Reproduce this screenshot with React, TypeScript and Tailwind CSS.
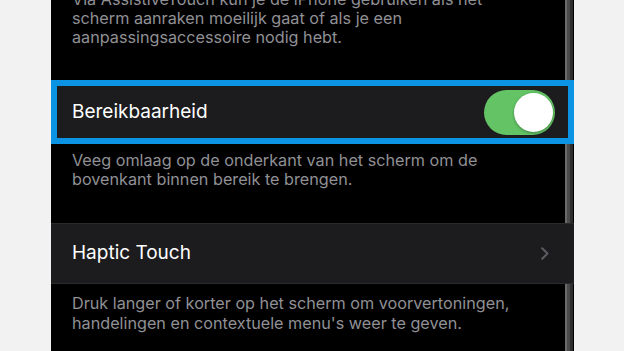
import React from "react";

const font = { fontFamily: "Inter, 'Noto Sans', 'Liberation Sans', sans-serif" };

export default function App() {
  return (
    <div className="w-[624px] h-[351px] overflow-hidden bg-[#f2f2f2] flex" style={font}>
      <div className="ml-[51px] w-[523px] h-full bg-black relative flex flex-col">
        {/* right bezel edge */}
        <div className="absolute top-0 bottom-0 right-0 w-[9px] flex">
          <div className="w-[2px] bg-[#6a6a6a]" />
          <div className="w-[3px] bg-[#4a4a4a]" />
          <div className="w-[3px] bg-[#2e2e2e]" />
          <div className="w-[1px] bg-black" />
        </div>

        <div className="relative z-10 flex flex-col">
          <p className="mt-[-10px] pl-[21px] pr-[30px] text-[16.2px] leading-[19px] text-[#909095]">
            Via AssistiveTouch kun je de iPhone gebruiken als het
            <br />
            scherm aanraken moeilijk gaat of als je een
            <br />
            aanpassingsaccessoire nodig hebt.
          </p>

          <div className="mt-[33px] h-[64px] border-[6px] border-[#0b93e4] bg-[#1c1c1e] flex items-center justify-between pl-[15px] pr-[13px]">
            <span className="text-[19px] text-white">Bereikbaarheid</span>
            <div className="w-[71px] h-[45px] rounded-full bg-[#64c465] flex items-center justify-end pr-[2px]">
              <div className="w-[39px] h-[39px] rounded-full bg-white shadow-[0_1px_3px_rgba(0,0,0,0.35)]" />
            </div>
          </div>

          <p className="mt-[7px] pl-[21px] pr-[30px] text-[16.2px] leading-[19px] text-[#909095]">
            Veeg omlaag op de onderkant van het scherm om de
            <br />
            bovenkant binnen bereik te brengen.
          </p>

          <div className="mt-[34px] h-[61px] bg-[#1c1c1e] border-t border-[#2a2a2c] border-b flex items-center justify-between pl-[21px] pr-[25px]">
            <span className="text-[19px] text-white">Haptic Touch</span>
            <svg width="8" height="13" viewBox="0 0 8 13" fill="none">
              <path d="M1.2 1.2 L6.5 6.5 L1.2 11.8" stroke="#5c5c61" strokeWidth="2" strokeLinecap="round" strokeLinejoin="round" />
            </svg>
          </div>

          <p className="mt-[9px] pl-[21px] pr-[30px] text-[16.2px] leading-[20px] text-[#909095]">
            Druk langer of korter op het scherm om voorvertoningen,
            <br />
            handelingen en contextuele menu's weer te geven.
          </p>
        </div>
      </div>
    </div>
  );
}
